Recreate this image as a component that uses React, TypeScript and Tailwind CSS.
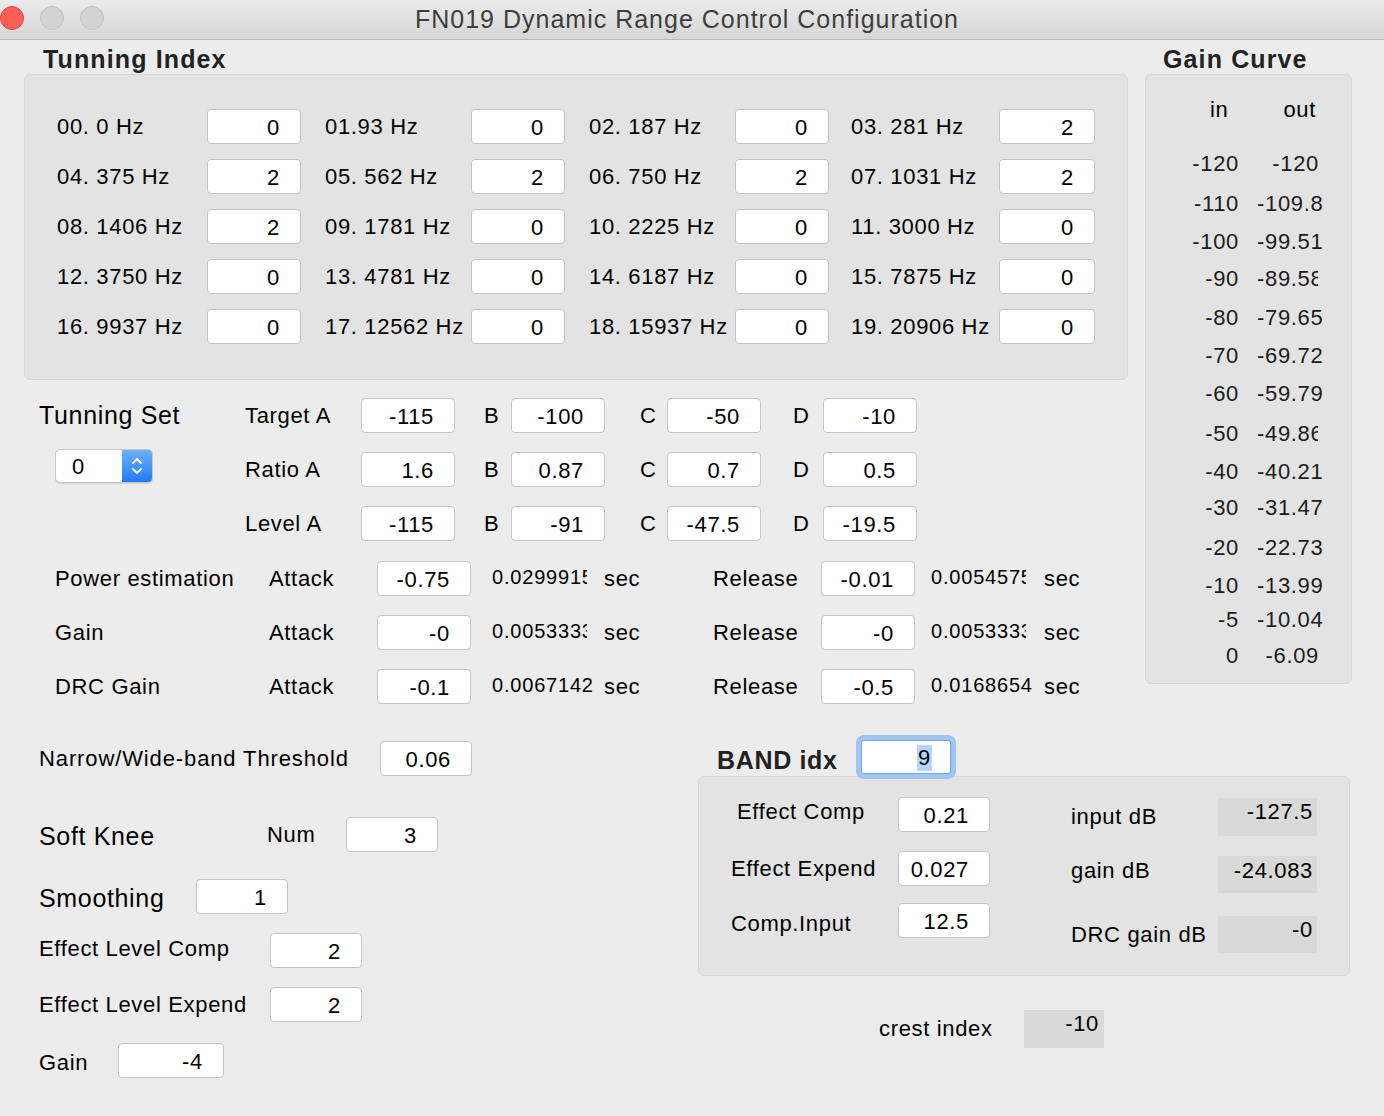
import React from 'react';

const freqRows: [string, string][][] = [
  [['00. 0 Hz', '0'], ['01.93 Hz', '0'], ['02. 187 Hz', '0'], ['03. 281 Hz', '2']],
  [['04. 375 Hz', '2'], ['05. 562 Hz', '2'], ['06. 750 Hz', '2'], ['07. 1031 Hz', '2']],
  [['08. 1406 Hz', '2'], ['09. 1781 Hz', '0'], ['10. 2225 Hz', '0'], ['11. 3000 Hz', '0']],
  [['12. 3750 Hz', '0'], ['13. 4781 Hz', '0'], ['14. 6187 Hz', '0'], ['15. 7875 Hz', '0']],
  [['16. 9937 Hz', '0'], ['17. 12562 Hz', '0'], ['18. 15937 Hz', '0'], ['19. 20906 Hz', '0']],
];
const labelW = ['w-[150px]', 'w-[146px]', 'w-[146px]', 'w-[148px]'];
const boxW = ['w-[94px] mr-[24px]', 'w-[94px] mr-[24px]', 'w-[94px] mr-[22px]', 'w-[96px]'];

const setRows = [
  { label: 'Target A', v: ['-115', '-100', '-50', '-10'] },
  { label: 'Ratio A', v: ['1.6', '0.87', '0.7', '0.5'] },
  { label: 'Level A', v: ['-115', '-91', '-47.5', '-19.5'] },
];

// the long seconds values get cut off by their field, like the native control
const timeRows = [
  { label: 'Power estimation', a: '-0.75', as: '0.0299915', asCut: true, r: '-0.01', rs: '0.0054575', rsCut: true },
  { label: 'Gain', a: '-0', as: '0.0053333', asCut: true, r: '-0', rs: '0.0053333', rsCut: true },
  { label: 'DRC Gain', a: '-0.1', as: '0.0067142', asCut: false, r: '-0.5', rs: '0.0168654', rsCut: false },
];

// [in, out, gap above, cut]
const curve: [string, string, string, boolean][] = [
  ['-120', '-120', 'mt-[24px]', false],
  ['-110', '-109.8', 'mt-[10px]', false],
  ['-100', '-99.51', 'mt-[8px]', false],
  ['-90', '-89.58', 'mt-[7px]', true],
  ['-80', '-79.65', 'mt-[9px]', false],
  ['-70', '-69.72', 'mt-[8px]', false],
  ['-60', '-59.79', 'mt-[8px]', false],
  ['-50', '-49.86', 'mt-[10px]', true],
  ['-40', '-40.21', 'mt-[8px]', false],
  ['-30', '-31.47', 'mt-[6px]', false],
  ['-20', '-22.73', 'mt-[10px]', false],
  ['-10', '-13.99', 'mt-[8px]', false],
  ['-5', '-10.04', 'mt-[4px]', false],
  ['0', '-6.09', 'mt-[6px]', false],
];

function Box({ value, className = 'w-[94px]' }: { value: string; className?: string }) {
  return (
    <div
      className={`${className} h-[35px] shrink-0 bg-white border border-[#c4c4c4] rounded-[4px] flex items-center justify-end pr-[20px] pt-[2px] whitespace-nowrap`}
    >
      {value}
    </div>
  );
}

function Secs({ value, cut }: { value: string; cut: boolean }) {
  return (
    <div
      className={`${cut ? 'w-[95px] mr-[8px]' : 'w-[103px]'} shrink-0 overflow-hidden whitespace-nowrap text-[20px] tracking-[0.04em] -mt-[3px]`}
    >
      {value}
    </div>
  );
}

function Lights() {
  return (
    <div className="flex gap-[16px] self-start mt-[6px]">
      <div className="w-[24px] h-[24px] rounded-full bg-[#fd5f57] border border-[#e2463f]" />
      <div className="w-[24px] h-[24px] rounded-full bg-[#d3d3d3] border border-[#c2c2c2]" />
      <div className="w-[24px] h-[24px] rounded-full bg-[#d3d3d3] border border-[#c2c2c2]" />
    </div>
  );
}

function Spinner() {
  return (
    <div className="w-[98px] h-[34px] flex rounded-[5px] border border-[#c6c6c6] overflow-hidden bg-white shadow-[0_1px_1px_rgba(0,0,0,0.1)]">
      <div className="flex-1 flex items-center pl-[16px] pt-[2px]">0</div>
      <div className="w-[30px] bg-linear-to-b from-[#6cb0fb] to-[#1f7bf1] flex items-center justify-center">
        <svg width="14" height="24" viewBox="0 0 14 24" fill="none" stroke="white" strokeWidth="1.8" strokeLinecap="round" strokeLinejoin="round">
          <path d="M3 9 L7 5 L11 9" />
          <path d="M3 15 L7 19 L11 15" />
        </svg>
      </div>
    </div>
  );
}

export default function App() {
  return (
    <div className="w-[1384px] h-[1116px] overflow-hidden bg-[#ececec] text-black font-['Liberation_Sans',Arial,sans-serif] text-[22px] tracking-[0.03em] leading-[1.15]">
      {/* Title bar */}
      <div className="h-[40px] border-b border-[#b9b9b9] bg-linear-to-b from-[#ebebeb] to-[#d6d6d6] grid grid-cols-[1fr_auto_1fr] items-center">
        <Lights />
        <div className="text-[25px] tracking-[0.04em] text-[#3e3e3e] pr-[10px]">FN019 Dynamic Range Control Configuration</div>
        <div />
      </div>

      <div className="pl-[24px]">
        <div className="flex">
          {/* Left column */}
          <div className="w-[1104px] shrink-0">
            <div className="ml-[19px] mt-[4px] h-[30px] leading-[30px] text-[25px] tracking-[0.045em] font-bold text-[#222]">Tunning Index</div>
            <div className="h-[306px] bg-[#e3e3e3] border border-[#d8d8d8] rounded-[6px] pt-[34px] flex flex-col gap-[15px]">
              {freqRows.map((row, ri) => (
                <div key={ri} className="flex items-center pl-[32px]">
                  {row.map(([label, v], ci) => (
                    <React.Fragment key={ci}>
                      <div className={`${labelW[ci]} shrink-0 whitespace-nowrap`}>{label}</div>
                      <Box value={v} className={boxW[ci]} />
                    </React.Fragment>
                  ))}
                </div>
              ))}
            </div>

            {/* Tunning Set */}
            <div className="mt-[18px] flex">
              <div className="ml-[15px] w-[206px] shrink-0">
                <div className="h-[35px] flex items-center text-[25px]">Tunning Set</div>
                <div className="mt-[16px] ml-[16px]">
                  <Spinner />
                </div>
              </div>
              <div className="flex flex-col gap-[19px]">
                {setRows.map((r) => (
                  <div key={r.label} className="flex items-center">
                    <div className="w-[116px] shrink-0">{r.label}</div>
                    <Box value={r.v[0]} />
                    <div className="ml-[29px] w-[27px] shrink-0">B</div>
                    <Box value={r.v[1]} />
                    <div className="ml-[35px] w-[27px] shrink-0">C</div>
                    <Box value={r.v[2]} />
                    <div className="ml-[32px] w-[30px] shrink-0">D</div>
                    <Box value={r.v[3]} />
                  </div>
                ))}
              </div>
            </div>

            {/* Attack / Release */}
            <div className="mt-[20px] ml-[31px] flex flex-col gap-[19px]">
              {timeRows.map((r) => (
                <div key={r.label} className="flex items-center">
                  <div className="w-[214px] shrink-0 whitespace-nowrap">{r.label}</div>
                  <div className="w-[108px] shrink-0">Attack</div>
                  <Box value={r.a} />
                  <div className="w-[21px] shrink-0" />
                  <Secs value={r.as} cut={r.asCut} />
                  <div className="ml-[9px] w-[36px] shrink-0">sec</div>
                  <div className="ml-[73px] w-[108px] shrink-0">Release</div>
                  <Box value={r.r} />
                  <div className="w-[16px] shrink-0" />
                  <Secs value={r.rs} cut={r.rsCut} />
                  <div className="ml-[10px] shrink-0">sec</div>
                </div>
              ))}
            </div>
          </div>

          {/* Gain curve */}
          <div className="ml-[17px] w-[207px] shrink-0">
            <div className="ml-[18px] mt-[4px] h-[30px] leading-[30px] text-[25px] tracking-[0.045em] font-bold text-[#222]">Gain Curve</div>
            <div className="h-[610px] bg-[#e3e3e3] border border-[#d8d8d8] rounded-[6px] pt-[20px]">
              <div className="h-[30px] flex items-center">
                <div className="ml-[64px]">in</div>
                <div className="ml-[55px]">out</div>
              </div>
              {curve.map(([i, o, gap, cut]) => (
                <div key={i} className={`${gap} h-[30px] flex items-center text-[#1c1c1c]`}>
                  <div className="w-[93px] shrink-0 text-right">{i}</div>
                  <div
                    className={`ml-[18px] ${cut ? 'w-[61px]' : 'w-[66px]'} shrink-0 pr-[4px] overflow-hidden flex [justify-content:safe_flex-end] whitespace-nowrap`}
                  >
                    <span className="shrink-0">{o}</span>
                  </div>
                </div>
              ))}
            </div>
          </div>
        </div>

        {/* Lower half */}
        <div className="flex">
          <div className="w-[674px] shrink-0 pl-[15px]">
            <div className="mt-[37px] h-[35px] flex items-center">
              <div className="w-[341px] shrink-0 whitespace-nowrap tracking-[0.04em]">Narrow/Wide-band Threshold</div>
              <Box value="0.06" className="w-[92px]" />
            </div>
            <div className="mt-[41px] h-[35px] flex items-center">
              <div className="w-[228px] shrink-0 text-[25px] pt-[3px]">Soft Knee</div>
              <div className="w-[79px] shrink-0">Num</div>
              <Box value="3" className="w-[92px]" />
            </div>
            <div className="mt-[27px] h-[35px] flex items-center">
              <div className="w-[157px] shrink-0 text-[25px] pt-[4px]">Smoothing</div>
              <Box value="1" className="w-[92px]" />
            </div>
            <div className="mt-[19px] h-[35px] flex items-center">
              <div className="w-[231px] shrink-0 whitespace-nowrap -mt-[3px]">Effect Level Comp</div>
              <Box value="2" className="w-[92px]" />
            </div>
            <div className="mt-[19px] h-[35px] flex items-center">
              <div className="w-[231px] shrink-0 whitespace-nowrap">Effect Level Expend</div>
              <Box value="2" className="w-[92px]" />
            </div>
            <div className="mt-[21px] h-[35px] flex items-center">
              <div className="w-[79px] shrink-0 pt-[4px]">Gain</div>
              <Box value="-4" className="w-[106px]" />
            </div>
          </div>

          <div className="w-[652px] shrink-0">
            <div className="mt-[36px] h-[34px] flex items-center">
              <div className="ml-[19px] w-[144px] shrink-0 text-[25px] font-bold text-[#222] pt-[6px]">BAND idx</div>
              <div className="w-[90px] h-[34px] bg-white border border-[#76a5e6] rounded-[3px] shadow-[0_0_0_5px_#9fc5f4] flex items-center justify-end pr-[18px] pt-[2px]">
                <span className="bg-[#b3d7ff] px-[1px]">9</span>
              </div>
            </div>
            <div className="mt-[2px] h-[200px] bg-[#e3e3e3] border border-[#d8d8d8] rounded-[6px] flex">
              <div className="pl-[32px] pt-[20px] flex flex-col">
                <div className="h-[35px] flex items-center">
                  <div className="w-[167px] shrink-0 pl-[6px] -mt-[5px]">Effect Comp</div>
                  <Box value="0.21" className="w-[92px]" />
                </div>
                <div className="mt-[19px] h-[35px] flex items-center">
                  <div className="w-[167px] shrink-0">Effect Expend</div>
                  <Box value="0.027" className="w-[92px]" />
                </div>
                <div className="mt-[17px] h-[35px] flex items-center">
                  <div className="w-[167px] shrink-0 pt-[7px]">Comp.Input</div>
                  <Box value="12.5" className="w-[92px]" />
                </div>
              </div>
              <div className="ml-[81px] pt-[21px] flex flex-col">
                <div className="h-[38px] flex items-center">
                  <div className="w-[147px] shrink-0">input dB</div>
                  <div className="w-[99px] h-[38px] bg-[#d9d9d9] flex justify-end pr-[4px] pt-[1px]">-127.5</div>
                </div>
                <div className="mt-[20px] h-[37px] flex items-center">
                  <div className="w-[147px] shrink-0 -mt-[8px]">gain dB</div>
                  <div className="w-[99px] h-[37px] bg-[#d9d9d9] flex justify-end pr-[4px] pt-[2px]">-24.083</div>
                </div>
                <div className="mt-[23px] h-[37px] flex items-center">
                  <div className="w-[147px] shrink-0">DRC gain dB</div>
                  <div className="w-[99px] h-[37px] bg-[#d9d9d9] flex justify-end pr-[4px] pt-[1px]">-0</div>
                </div>
              </div>
            </div>
            <div className="mt-[34px] h-[38px] flex items-center">
              <div className="ml-[181px] w-[145px] shrink-0">crest index</div>
              <div className="w-[80px] h-[38px] bg-[#dadada] flex justify-end pr-[5px] pt-[1px]">-10</div>
            </div>
          </div>
        </div>
      </div>
    </div>
  );
}
